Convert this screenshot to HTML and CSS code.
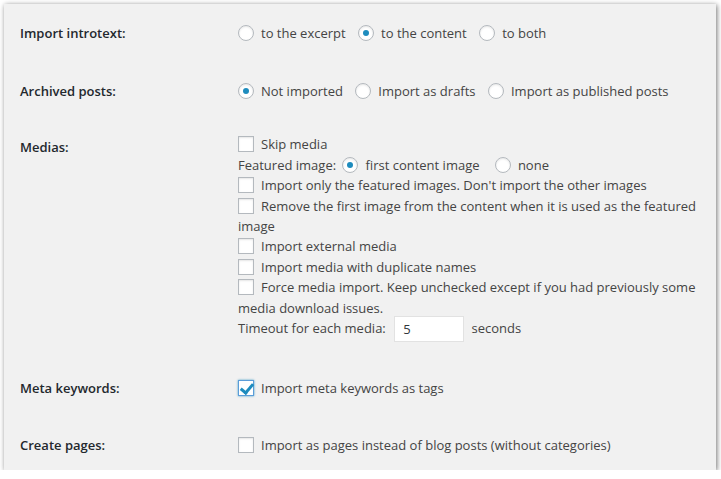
FILE: index.html
```html
<!DOCTYPE html>
<html lang="en">
<head>
    <meta charset="UTF-8">
    <title>Import options</title>
    <link rel="stylesheet" href="styles.css">
</head>
<body>
    <div class="panel">
        <table class="form-table">
            <tr class="row-intro">
                <th>Import introtext:</th>
                <td>
                    <label class="opt"><input type="radio" name="introtext">to the excerpt</label>
                    <label class="opt"><input type="radio" name="introtext" checked>to the content</label>
                    <label class="opt"><input type="radio" name="introtext">to both</label>
                </td>
            </tr>
            <tr class="row-archived">
                <th>Archived posts:</th>
                <td>
                    <label class="opt"><input type="radio" name="archived" checked>Not imported</label>
                    <label class="opt"><input type="radio" name="archived">Import as drafts</label>
                    <label class="opt"><input type="radio" name="archived">Import as published posts</label>
                </td>
            </tr>
            <tr class="row-medias">
                <th>Medias:</th>
                <td>
                    <div class="line"><label><input type="checkbox">Skip media</label></div>
                    <div class="line featured">Featured image:
                        <label class="opt"><input type="radio" name="featured" checked>first content image</label>
                        <label class="opt"><input type="radio" name="featured">none</label>
                    </div>
                    <div class="line"><label><input type="checkbox">Import only the featured images. Don't import the other images</label></div>
                    <div class="line"><label><input type="checkbox">Remove the first image from the content when it is used as the featured image</label></div>
                    <div class="line"><label><input type="checkbox">Import external media</label></div>
                    <div class="line"><label><input type="checkbox">Import media with duplicate names</label></div>
                    <div class="line"><label><input type="checkbox">Force media import. Keep unchecked except if you had previously some media download issues.</label></div>
                    <div class="line">Timeout for each media: <input type="text" class="small-text" value="5"> seconds</div>
                </td>
            </tr>
            <tr class="row-meta">
                <th>Meta keywords:</th>
                <td>
                    <label><input type="checkbox" checked>Import meta keywords as tags</label>
                </td>
            </tr>
            <tr class="row-pages">
                <th>Create pages:</th>
                <td>
                    <label><input type="checkbox">Import as pages instead of blog posts (without categories)</label>
                </td>
            </tr>
        </table>
    </div>
</body>
</html>
```

FILE: styles.css
```css
:root {
    --panel-bg: #f1f1f1;
    --text: #444;
    --heading: #23282d;
    --field-border: #b4b9be;
    --accent: #1e8cbe;
}

body {
    margin: 0;
    background: #ffffff;
    font-family: "Open Sans", "Noto Sans", sans-serif;
    font-size: 13px;
    color: var(--text);
}

/* Screenshot frame */
.panel {
    margin: 4px 5px 0 4px;
    height: 466px;
    background: var(--panel-bg);
    box-shadow: 1px 1px 5px rgba(0, 0, 0, 0.55);
}

.form-table {
    width: 100%;
    border-collapse: collapse;
}

.form-table th {
    width: 218px;
    padding: 18.5px 0 18.5px 16px;
    text-align: left;
    vertical-align: top;
    font-weight: 600;
    color: var(--heading);
    line-height: 20.4px;
}

.form-table td {
    padding: 18.5px 14px 18.5px 0;
    vertical-align: top;
    line-height: 20.4px;
}

.row-intro th,
.row-intro td {
    padding-top: 19px;
    padding-bottom: 19.5px;
}

.row-medias td {
    padding-top: 14px;
    padding-bottom: 20px;
}

.row-medias th {
    padding-top: 17px;
}

.row-pages th,
.row-pages td {
    padding-bottom: 15px;
}

.opt {
    margin-right: 9px;
}

.featured .opt:first-child {
    margin-left: 3px;
    margin-right: 12px;
}

/* Checkboxes and radios */
input[type="checkbox"],
input[type="radio"] {
    appearance: none;
    -webkit-appearance: none;
    position: relative;
    display: inline-block;
    width: 16px;
    height: 16px;
    margin: 0 7px 0 0;
    vertical-align: -3px;
    border: 1px solid var(--field-border);
    background: #fff;
    box-sizing: border-box;
    box-shadow: inset 0 1px 2px rgba(0, 0, 0, 0.1);
}

input[type="radio"] {
    border-radius: 50%;
}

input[type="radio"]:checked::before {
    content: "";
    position: absolute;
    left: 4px;
    top: 4px;
    width: 6px;
    height: 6px;
    border-radius: 50%;
    background: var(--accent);
}

input[type="checkbox"]:checked {
    border-color: #5b9dd9;
    box-shadow: 0 0 2px rgba(30, 140, 190, 0.8);
}

input[type="checkbox"]:checked::before {
    content: "";
    position: absolute;
    left: 4px;
    top: 0;
    width: 5px;
    height: 10px;
    border-right: 3px solid var(--accent);
    border-bottom: 3px solid var(--accent);
    transform: rotate(40deg);
}

.small-text {
    width: 70px;
    height: 26px;
    margin: -3px 4px -3px 5px;
    padding: 0 8px;
    box-sizing: border-box;
    border: 1px solid #e2e2e2;
    background: #fff;
    font: inherit;
    color: #32373c;
    vertical-align: middle;
}
```
